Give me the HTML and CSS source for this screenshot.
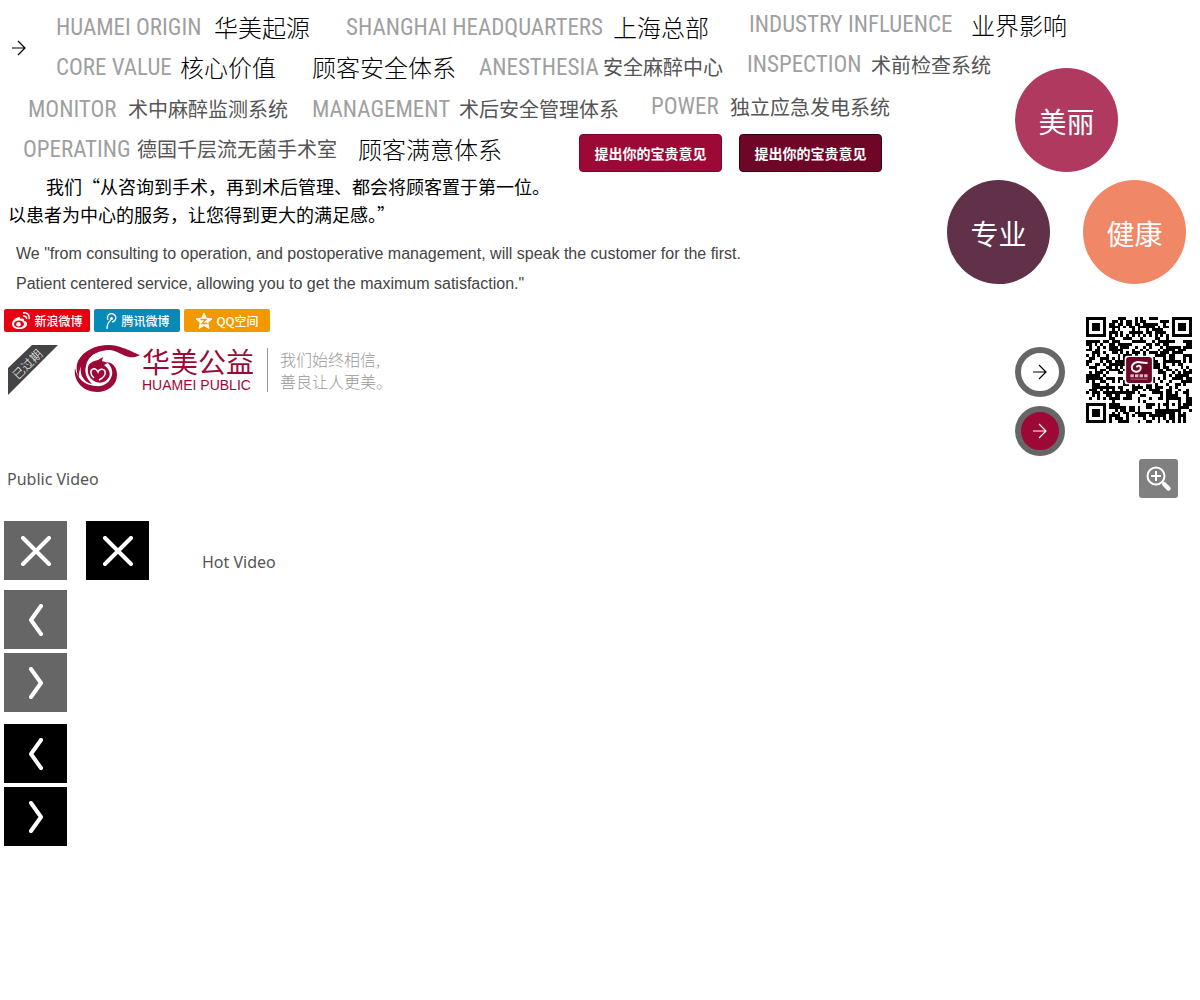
FILE: index.html
```html
<!DOCTYPE html>
<html lang="zh-CN">
<head>
<meta charset="utf-8">
<meta name="viewport" content="width=device-width, initial-scale=1">
<title>华美公益</title>
<link rel="stylesheet" href="styles.css">
</head>
<body>
<main class="page">
  <a class="more" href="#" aria-label="更多"><svg width="14" height="16" viewBox="0 0 14 16"><path d="M0 8H13M6 1l7 7-7 7" fill="none" stroke="currentColor" stroke-width="1.2"/></svg></a>

  <div class="topics topics-about">
    <span class="en">HUAMEI ORIGIN</span><span class="zh">华美起源</span>
    <span class="en">SHANGHAI HEADQUARTERS</span><span class="zh">上海总部</span>
    <span class="en raised">INDUSTRY INFLUENCE</span><span class="zh raised">业界影响</span>
  </div>

  <div class="topics topics-value">
    <span class="en">CORE VALUE</span><span class="zh">核心价值</span>
    <span class="zh">顾客安全体系</span>
    <span class="en">ANESTHESIA</span><span class="zh small">安全麻醉中心</span>
    <span class="en raised">INSPECTION</span><span class="zh small raised">术前检查系统</span>
  </div>

  <section class="content">
    <div class="topics topics-safety">
      <span class="en">MONITOR</span><span class="zh small">术中麻醉监测系统</span>
      <span class="en">MANAGEMENT</span><span class="zh small">术后安全管理体系</span>
      <span class="en raised">POWER</span><span class="zh small raised">独立应急发电系统</span>
    </div>
    <div class="topics topics-service">
      <span class="en">OPERATING</span><span class="zh small">德国千层流无菌手术室</span>
      <span class="zh">顾客满意体系</span>
      <button class="feedback" type="button">提出你的宝贵意见</button>
      <button class="feedback feedback-dark" type="button">提出你的宝贵意见</button>
    </div>

    <p class="quote">我们“从咨询到手术，再到术后管理、都会将顾客置于第一位。<br>以患者为中心的服务，让您得到更大的满足感。”</p>
    <p class="quote-en">We "from consulting to operation, and postoperative management, will speak the customer for the first.<br>Patient centered service, allowing you to get the maximum satisfaction."</p>

    <div class="share">
      <a class="share-link weibo" href="#"><svg width="20" height="18" viewBox="0 0 20 18"><path d="M8 5C4 6 1 9 1 12c0 3 3 5 7 5 5 0 8-2 8-5 0-2-1-3-3-3 1-2-1-3-4-2 1-1 0-2-1-2z" fill="#fff"/><ellipse cx="8" cy="12" rx="5" ry="3.6" fill="#e60012"/><circle cx="7.500" cy="12.300" r="2.300" fill="#fff"/><path d="M12 1c4-1 7 2 6 6M12 4c2-.4 4 1 3.500 3" fill="none" stroke="#fff" stroke-width="1.500"/></svg>新浪微博</a>
      <a class="share-link tencent" href="#"><svg width="14" height="18" viewBox="0 0 14 18"><path d="M3 17c0-4 1-7 4-9M4 8a4.200 4.200 0 1 1 4 2" fill="none" stroke="#fff" stroke-width="1.300"/><circle cx="7.500" cy="6.500" r="1.500" fill="#fff"/></svg>腾讯微博</a>
      <a class="share-link qzone" href="#"><svg width="18" height="18" viewBox="0 0 18 18"><path d="M9 1l2.300 5.200 5.700.6-4.300 3.900 1.300 5.800L9 13.500l-5 3 1.300-5.800L1 6.800l5.700-.6z" fill="#fff" stroke="#fff" stroke-linejoin="round"/><path d="M5.500 7.500H11L7 11.500h5.500" fill="none" stroke="#f49800" stroke-width="1.300"/></svg>QQ空间</a>
    </div>

    <div class="brand">
      <svg class="expired" width="50" height="50" viewBox="0 0 50 50" role="img" aria-label="已过期"><path d="M24 0H50L0 50V23z" fill="#444"/><text x="19" y="24" transform="rotate(-45 19 19)" text-anchor="middle">已过期</text></svg>
      <svg class="logo" width="67" height="48" viewBox="0 0 67 48" role="img" aria-label="华美">
        <g fill="#9c0936">
          <path d="M66 10C60 8 56 5 49 3 40-1 27-1 17 4 24 1 33 2 40 5c8 4 16 11 26 5z"/>
          <path d="M33 1C19 0 6 8 3 19c-1 5 0 10 2 14C4 21 13 8 33 5c7 0 10 2 14 4C43 3 39 1 33 1z"/>
          <path d="M1 23c-2 13 8 24 22 24 11 0 20-7 20-17 0-8-4-12-10-13 4 4 6 8 5 13-2 8-9 12-17 11C10 40 3 33 1 23z"/>
          <path d="M23 7C12 10 5 18 7 28c1 6 6 10 11 11-5-5-8-11-6-18 1-6 5-11 11-14z"/>
          <path d="M14 22c1-4 5-6 10-7l5-3-1 4 6 2-4 2c5 4 7 8 5 12-3 6-10 7-15 4-5-3-7-8-6-14z"/>
        </g>
        <path d="M20 33c-4-3-4-8-1-9 2-1 4 1 5 3 1-3 5-4 7-1 1 4-2 7-6 9" fill="none" stroke="#fff" stroke-width="1.500"/>
      </svg>
      <div class="brand-name"><strong>华美公益</strong><span>HUAMEI PUBLIC</span></div>
      <p class="slogan">我们始终相信,<br>善良让人更美。</p>
    </div>

    <h2 class="video-title">Public Video</h2>

    <div class="closers">
      <button class="tile" type="button" aria-label="关闭"><svg width="30" height="30" viewBox="0 0 30 30"><path d="M2 2l26 26M28 2L2 28"/></svg></button>
      <button class="tile dark" type="button" aria-label="关闭"><svg width="30" height="30" viewBox="0 0 30 30"><path d="M2 2l26 26M28 2L2 28"/></svg></button>
      <h2 class="video-title hot">Hot Video</h2>
    </div>
    <div class="pager">
      <button class="tile" type="button" aria-label="上一个"><svg width="14" height="32" viewBox="0 0 14 32"><path d="M12 2L2 16l10 14"/></svg></button>
      <button class="tile" type="button" aria-label="下一个"><svg width="14" height="32" viewBox="0 0 14 32"><path d="M2 2l10 14L2 30"/></svg></button>
    </div>
    <div class="pager pager-dark">
      <button class="tile dark" type="button" aria-label="上一个"><svg width="14" height="32" viewBox="0 0 14 32"><path d="M12 2L2 16l10 14"/></svg></button>
      <button class="tile dark" type="button" aria-label="下一个"><svg width="14" height="32" viewBox="0 0 14 32"><path d="M2 2l10 14L2 30"/></svg></button>
    </div>
  </section>

  <aside class="side">
    <div class="values">
      <span class="value beauty">美丽</span>
      <span class="value pro">专业</span>
      <span class="value health">健康</span>
    </div>
    <div class="tools">
      <div class="rounds">
        <button class="round" type="button" aria-label="前进"><svg width="14" height="16" viewBox="0 0 14 16"><path d="M0 8H13M6 1l7 7-7 7" fill="none" stroke="currentColor" stroke-width="1.2"/></svg></button>
        <button class="round active" type="button" aria-label="前进"><svg width="14" height="16" viewBox="0 0 14 16"><path d="M0 8H13M6 1l7 7-7 7" fill="none" stroke="currentColor" stroke-width="1.2"/></svg></button>
      </div>
      <div class="scan">
        <svg id="qr" width="106" height="106" viewBox="0 0 37 37" role="img" aria-label="二维码"></svg>
        <button class="zoom" type="button" aria-label="放大"><svg width="26" height="26" viewBox="0 0 26 26" fill="none" stroke="#fff" stroke-width="2"><circle cx="10" cy="10" r="8.500"/><path d="M5 10h10M10 5v10"/><path d="M16 16l2 2"/><path d="M18.500 18.500l4 4" stroke-width="4.500" stroke-linecap="round"/></svg></button>
      </div>
    </div>
  </aside>
</main>
<script src="qr.js"></script>
</body>
</html>
```
FILE: styles.css
```css
* { box-sizing: border-box; }

body {
  margin: 0;
  background: #fff;
  color: #000;
  font-family: "Liberation Sans", "Noto Sans CJK SC", sans-serif;
}

p, h2 { margin: 0; }
a { text-decoration: none; }
svg { display: block; flex: none; }
button { padding: 0; border: 0; font-family: inherit; }

.page {
  display: grid;
  grid-template-columns: 56px minmax(0, 1fr) 253px;
  grid-template-rows: 40px 40px auto;
  grid-template-areas:
    "more about about"
    "more value side"
    "content content side";
  padding-top: 8px;
}

.more {
  grid-area: more;
  align-self: center;
  padding-left: 12px;
  color: #000;
}

.topics {
  display: grid;
  grid-auto-rows: 40px;
  align-items: center;
  white-space: nowrap;
}
.topics-about {
  grid-area: about;
  grid-template-columns: 158px 132px 267px 136px 222px auto;
}
.topics-value {
  grid-area: value;
  grid-template-columns: 124px 132px 167px 124px 144px 124px 1fr;
}
.topics-safety {
  padding: 4px 0 0 28px;
  grid-auto-rows: 36px;
  grid-template-columns: 100px 184px 147px 192px 79px auto;
}
.topics-service {
  padding-left: 23px;
  grid-auto-rows: 44px;
  grid-template-columns: 114px 221px 221px 160px auto;
}

.en {
  color: #9f9f9f;
  font: 23px/32px "Roboto Condensed", "Liberation Sans Narrow", "Liberation Sans", sans-serif;
}
.zh {
  padding-bottom: 2px;
  font: 300 24px/32px "Noto Sans CJK SC", sans-serif;
}
.small { color: #555; font-size: 20px; font-weight: 400; }
.raised { padding-bottom: 6px; }

.feedback {
  align-self: end;
  width: 143px;
  height: 38px;
  border: 1px solid #7d0329;
  border-radius: 4px;
  background: #9c0936;
  color: #fff;
  font: 700 14px/20px "Noto Sans CJK SC", sans-serif;
}
.feedback-dark { border-color: #35000f; background: #6f0628; }

.content { grid-area: content; }

.quote {
  padding-left: 8px;
  text-indent: 38px;
  font: 18px/28px "Noto Sans CJK SC", sans-serif;
  white-space: nowrap;
}
.quote-en {
  margin-top: 11px;
  padding-left: 16px;
  color: #444;
  font-size: 16px;
  line-height: 30px;
}

.share {
  display: flex;
  gap: 4px;
  margin-top: 10px;
  padding-left: 4px;
}
.share-link {
  display: flex;
  align-items: center;
  justify-content: center;
  gap: 3px;
  width: 86px;
  height: 23px;
  border-radius: 2px;
  color: #fff;
  font: 500 12px/20px "Noto Sans CJK SC", sans-serif;
}
.weibo { background: #e60012; }
.tencent { background: #078ab8; }
.qzone { background: #f49800; }

.brand {
  display: flex;
  margin-top: 13px;
  padding-left: 8px;
}
.expired text {
  fill: #fff;
  font: 300 12px "Noto Sans CJK SC", sans-serif;
}
.logo { margin-left: 16px; }
.brand-name {
  display: flex;
  flex-direction: column;
  margin-left: 1px;
  padding-right: 13px;
  color: #9c0936;
}
.brand-name strong { font: 28px/32px "Noto Sans CJK SC", sans-serif; }
.brand-name span { font-size: 14px; line-height: 16px; }
.slogan {
  align-self: center;
  padding-left: 12px;
  border-left: 1px solid #999;
  color: #999;
  font: 300 16px/22px "Noto Sans CJK SC", sans-serif;
}

.video-title {
  margin-top: 72px;
  padding-left: 7px;
  color: #555;
  font: 16px/24px "Noto Sans", sans-serif;
}
.closers {
  display: flex;
  align-items: center;
  gap: 19px;
  margin-top: 30px;
  padding-left: 4px;
}
.hot { margin: 22px 0 0 27px; }
.pager {
  display: flex;
  flex-direction: column;
  gap: 4px;
  margin-top: 10px;
  padding-left: 4px;
}
.pager-dark { margin-top: 12px; }
.tile {
  display: flex;
  align-items: center;
  justify-content: center;
  width: 63px;
  height: 59px;
  background: #666;
}
.tile.dark { background: #000; }
.tile path {
  fill: none;
  stroke: #fff;
  stroke-width: 4;
  stroke-linecap: round;
  stroke-linejoin: round;
}

.side { grid-area: side; padding-top: 20px; }
.values {
  display: grid;
  grid-template-columns: 103px 103px;
  gap: 8px 33px;
}
.value {
  display: flex;
  align-items: center;
  justify-content: center;
  width: 103px;
  height: 104px;
  padding-top: 2px;
  border-radius: 50%;
  color: #fff;
  font: 28px/40px "Noto Sans CJK SC", sans-serif;
}
.beauty { grid-column: 1 / 3; justify-self: center; background: #b03a5f; }
.pro { background: #613149; }
.health { background: #f08766; }

.tools {
  display: flex;
  justify-content: flex-end;
  gap: 21px;
  margin-top: 33px;
  padding-right: 8px;
}
.rounds {
  display: flex;
  flex-direction: column;
  gap: 9px;
  padding-top: 30px;
}
.round {
  display: flex;
  align-items: center;
  justify-content: center;
  width: 50px;
  height: 50px;
  border: 6px solid #666;
  border-radius: 50%;
  background: #fff;
  color: #000;
}
.round.active { background: #9c0936; color: #fff; }
.scan {
  display: flex;
  flex-direction: column;
  align-items: flex-end;
  gap: 36px;
}
.zoom {
  display: flex;
  align-items: center;
  justify-content: center;
  width: 39px;
  height: 39px;
  margin-right: 14px;
  border-radius: 3px;
  background: #808080;
}
```
FILE: qr.js
```js
// Draws a 37-module code with finder patterns and the brand tile in the middle.
const size = 37;
let seed = 20137;
const random = () => (seed = (seed * 16807) % 2147483647) / 2147483647;

const finder = (x, y, left, top) => {
  const ring = Math.max(Math.abs(x - left - 3), Math.abs(y - top - 3));
  return ring > 4 ? null : ring !== 2 && ring !== 4;
};

let path = "";
for (let y = 0; y < size; y++) {
  for (let x = 0; x < size; x++) {
    let on = random() < 0.54;
    if (x === 6 || y === 6) on = (x + y) % 2 === 0;
    const align = Math.max(Math.abs(x - 30), Math.abs(y - 30));
    if (align < 3) on = align !== 1;
    for (const [left, top] of [[0, 0], [30, 0], [0, 30]]) {
      const mark = finder(x, y, left, top);
      if (mark !== null) on = mark;
    }
    if (on) path += `M${x} ${y}h1v1h-1z`;
  }
}

document.getElementById("qr").innerHTML = `
  <path d="${path}" fill="#000" shape-rendering="crispEdges"/>
  <rect x="13.500" y="13.500" width="10" height="10" rx="1" fill="#fff"/>
  <rect x="14" y="14" width="9" height="9" rx="1" fill="#6f0628"/>
  <path d="M21.500 16c-2 .3-4-1.200-5.300.8-1.300 2.400 2.800 3.200 2.900 1 0-1-1.300-1-1.400-.2" fill="none" stroke="#fff" stroke-width=".7"/>
  <path d="M15.500 20.500h6" stroke="#d9b3c0" stroke-width="1" stroke-dasharray="1.200 .4"/>
  <path d="M15.500 21.700h6" stroke="#d9b3c0" stroke-width=".2"/>`;
```
